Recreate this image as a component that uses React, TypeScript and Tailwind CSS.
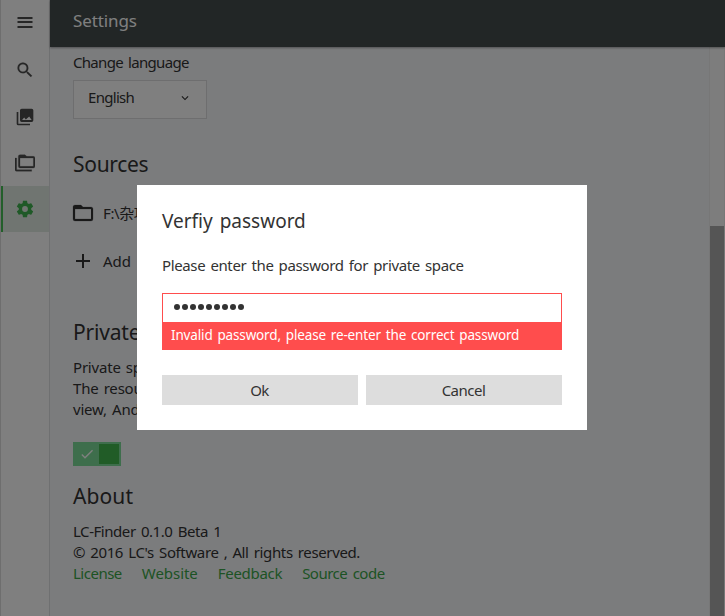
import type { ReactNode } from "react";

function Icon({ d, size = 20, className = "" }: { d: string; size?: number; className?: string }) {
  return (
    <svg width={size} height={size} viewBox="0 0 24 24" fill="currentColor" className={`shrink-0 ${className}`}>
      <path d={d} />
    </svg>
  );
}

const icons = {
  menu: "M3,4.8H21V7.2H3V4.8M3,9.6H21V12H3V9.6M3,15.6H21V18H3V15.6Z",
  search:
    "M9.5,3A6.5,6.5 0 0,1 16,9.5C16,11.11 15.41,12.59 14.44,13.73L14.71,14H15.5L20.5,19L19,20.5L14,15.5V14.71L13.73,14.44C12.59,15.41 11.11,16 9.5,16A6.5,6.5 0 0,1 3,9.5A6.5,6.5 0 0,1 9.5,3M9.5,5C7,5 5,7 5,9.5C5,12 7,14 9.5,14C12,14 14,12 14,9.5C14,7 12,5 9.5,5Z",
  images:
    "M22,16V4A2,2 0 0,0 20,2H8A2,2 0 0,0 6,4V16A2,2 0 0,0 8,18H20A2,2 0 0,0 22,16M8.5,15.5L11,12.5L13,15L17,11.5L20,15.5H8.5M2,6V20A2,2 0 0,0 4,22H18V20H4V6",
  folders:
    "M22,4A2,2 0 0,1 24,6V16A2,2 0 0,1 22,18H6A2,2 0 0,1 4,16V4A2,2 0 0,1 6,2H12L14,4H22M2,6V20H20V22H2A2,2 0 0,1 0,20V11H0V6H2M6,6V16H22V6H6Z",
  settings:
    "M12,15.5A3.5,3.5 0 0,1 8.5,12A3.5,3.5 0 0,1 12,8.5A3.5,3.5 0 0,1 15.5,12A3.5,3.5 0 0,1 12,15.5M19.43,12.97C19.47,12.65 19.5,12.33 19.5,12C19.5,11.67 19.47,11.34 19.43,11L21.54,9.37C21.73,9.22 21.78,8.95 21.66,8.73L19.66,5.27C19.54,5.05 19.27,4.96 19.05,5.05L16.56,6.05C16.04,5.66 15.5,5.32 14.87,5.07L14.5,2.42C14.46,2.18 14.25,2 14,2H10C9.75,2 9.54,2.18 9.5,2.42L9.13,5.07C8.5,5.32 7.96,5.66 7.44,6.05L4.95,5.05C4.73,4.96 4.46,5.05 4.34,5.27L2.34,8.73C2.21,8.95 2.27,9.22 2.46,9.37L4.57,11C4.53,11.34 4.5,11.67 4.5,12C4.5,12.33 4.53,12.65 4.57,12.97L2.46,14.63C2.27,14.78 2.21,15.05 2.34,15.27L4.34,18.73C4.46,18.95 4.73,19.03 4.95,18.95L7.44,17.94C7.96,18.34 8.5,18.68 9.13,18.93L9.5,21.58C9.54,21.82 9.75,22 10,22H14C14.25,22 14.46,21.82 14.5,21.58L14.87,18.93C15.5,18.67 16.04,18.34 16.56,17.94L19.05,18.95C19.27,19.03 19.54,18.95 19.66,18.73L21.66,15.27C21.78,15.05 21.73,14.78 21.54,14.63L19.43,12.97Z",
  folder: "M20,18H4V8H20M20,6H12L10,4H4C2.89,4 2,4.89 2,6V18A2,2 0 0,0 4,20H20A2,2 0 0,0 22,18V8C22,6.89 21.1,6 20,6Z",
  plus: "M19,13H13V19H11V13H5V11H11V5H13V11H19V13Z",
  chevron: "M7.41,8.58L12,13.17L16.59,8.58L18,10L12,16L6,10L7.41,8.58Z",
  check: "M21,7L9,19L3.5,13.5L4.91,12.09L9,16.17L19.59,5.59L21,7Z",
};

function Heading({ children }: { children: ReactNode }) {
  return <h2 className="h-7 text-[21px] leading-7">{children}</h2>;
}

function Sidebar() {
  return (
    <nav className="flex w-[50px] shrink-0 flex-col border-x border-l-[#dcdcdc] border-r-[#dfe0e2] bg-white text-[#4c4c4c]">
      <div className="flex h-[46px] items-center justify-center"><Icon d={icons.menu} /></div>
      <div className="flex h-[48px] items-center justify-center"><Icon d={icons.search} className="stroke-current stroke-[0.2]" /></div>
      <div className="flex h-[46px] items-center justify-center pb-px"><Icon d={icons.images} /></div>
      <div className="flex h-[46px] items-center justify-center pb-px"><Icon d={icons.folders} className="stroke-current stroke-[0.3]" /></div>
      <div className="flex h-[46px] items-center justify-center border-l-2 border-[#45bf55] bg-[#e0ebe3] pr-0.5 pb-px text-[#3eb34e]">
        <Icon d={icons.settings} />
      </div>
    </nav>
  );
}

function Content() {
  return (
    <main className="min-w-0 flex-1 overflow-hidden pl-[23px] text-[15px] leading-[21px]">
      <p className="mt-[5px] tracking-[-0.7px] [word-spacing:2px]">Change language</p>
      <div className="mt-[7px] flex h-[39px] w-[134px] items-center justify-between border border-[#dcdddf] bg-white pr-[14px] pb-[4px] pl-[14px] tracking-[-0.7px]">
        <span>English</span>
        <Icon d={icons.chevron} size={14} />
      </div>
      <div className="mt-[31px] tracking-[-0.3px]"><Heading>Sources</Heading></div>
      <div className="mt-[23px] flex h-6 items-center gap-[6px]">
        <Icon d={icons.folder} size={24} className="-ml-0.5 stroke-current stroke-[0.2]" />
        <span className="ml-0.5 tracking-[-0.4px]">F:\杂项</span>
      </div>
      <div className="mt-6 flex h-6 items-center gap-[6px]">
        <Icon d={icons.plus} size={24} className="-ml-0.5" />
        <span className="ml-0.5 [word-spacing:4px]">Add source</span>
      </div>
      <div className="mt-[45px] tracking-[-0.2px]"><Heading>Private space</Heading></div>
      <p className="mt-[11px] w-[600px] tracking-[-0.2px] [word-spacing:1.5px]">
        Private space is hidden by default.<br />
        The resources are not visible in<br />
        view, And search results.
      </p>
      <div className="mt-[22px] flex h-6 w-12 items-center justify-between bg-[#7cdd98] p-0.5 pl-[6px] text-white">
        <Icon d={icons.check} size={16} />
        <div className="size-5 bg-[#43b84f]" />
      </div>
      <div className="mt-4 tracking-[0.1px]"><Heading>About</Heading></div>
      <p className="mt-[11px] tracking-[-0.45px] [word-spacing:1.8px]">LC-Finder 0.1.0 Beta 1</p>
      <p className="tracking-[-0.37px] [word-spacing:1.6px]">© 2016 LC's Software , All rights reserved.</p>
      <div className="flex gap-5 text-[#3ba749]">
        <a className="tracking-[-0.5px]">License</a>
        <a className="tracking-[-0.05px]">Website</a>
        <a className="tracking-[-0.3px]">Feedback</a>
        <a className="tracking-[-0.5px] [word-spacing:2px]">Source code</a>
      </div>
    </main>
  );
}

function PasswordDialog() {
  return (
    <div className="absolute inset-0 bg-black/50">
      <section className="mt-[185px] ml-[137px] flex h-[245px] w-[450px] flex-col bg-white px-[25px] pt-[22px] text-[15px]">
        <h1 className="h-7 text-[19px] leading-7 [word-spacing:2px]">Verfiy password</h1>
        <p className="mt-5 h-5 leading-5 tracking-[-0.37px] [word-spacing:1.6px]">Please enter the password for private space</p>
        <div className="mt-[18px] flex h-[29px] items-center gap-[2px] border border-b-0 border-[#ff4d4d] pb-[2px] pl-[11px]">
          {Array.from({ length: 9 }, (_, i) => (
            <span key={i} className="size-1.5 rounded-full bg-[#333]" />
          ))}
        </div>
        <p className="h-[28px] bg-[#ff4d4d] pl-[9px] text-[13.5px] leading-[26px] tracking-[-0.15px] text-white [word-spacing:1.5px]">
          Invalid password, please re-enter the correct password
        </p>
        <div className="mt-[25px] grid h-[30px] grid-cols-2 gap-2 tracking-[-0.5px]">
          <button className="bg-[#ddd] pr-px">Ok</button>
          <button className="bg-[#ddd] pr-px">Cancel</button>
        </div>
      </section>
    </div>
  );
}

export default function App() {
  return (
    <div className="relative flex h-[616px] w-[725px] overflow-hidden bg-[#f7f8fb] font-['Noto_Sans','Noto_Sans_CJK_SC',sans-serif] text-[#333]">
      <Sidebar />
      <div className="flex min-w-0 flex-1 flex-col">
        <header className="z-0 flex h-[47px] shrink-0 items-center bg-[#444c4c] pb-[5px] pl-[23px] text-[17px] tracking-[-0.1px] text-white shadow-[0_1px_2px_rgba(0,0,0,0.35)]">
          Settings
        </header>
        <div className="flex min-h-0 flex-1">
          <Content />
          <div className="flex w-4 shrink-0 flex-col border-x border-[#efefef] bg-[#fafafa] pt-[179px]">
            <div className="flex-1 bg-[#aaa]" />
          </div>
        </div>
      </div>
      <PasswordDialog />
    </div>
  );
}
